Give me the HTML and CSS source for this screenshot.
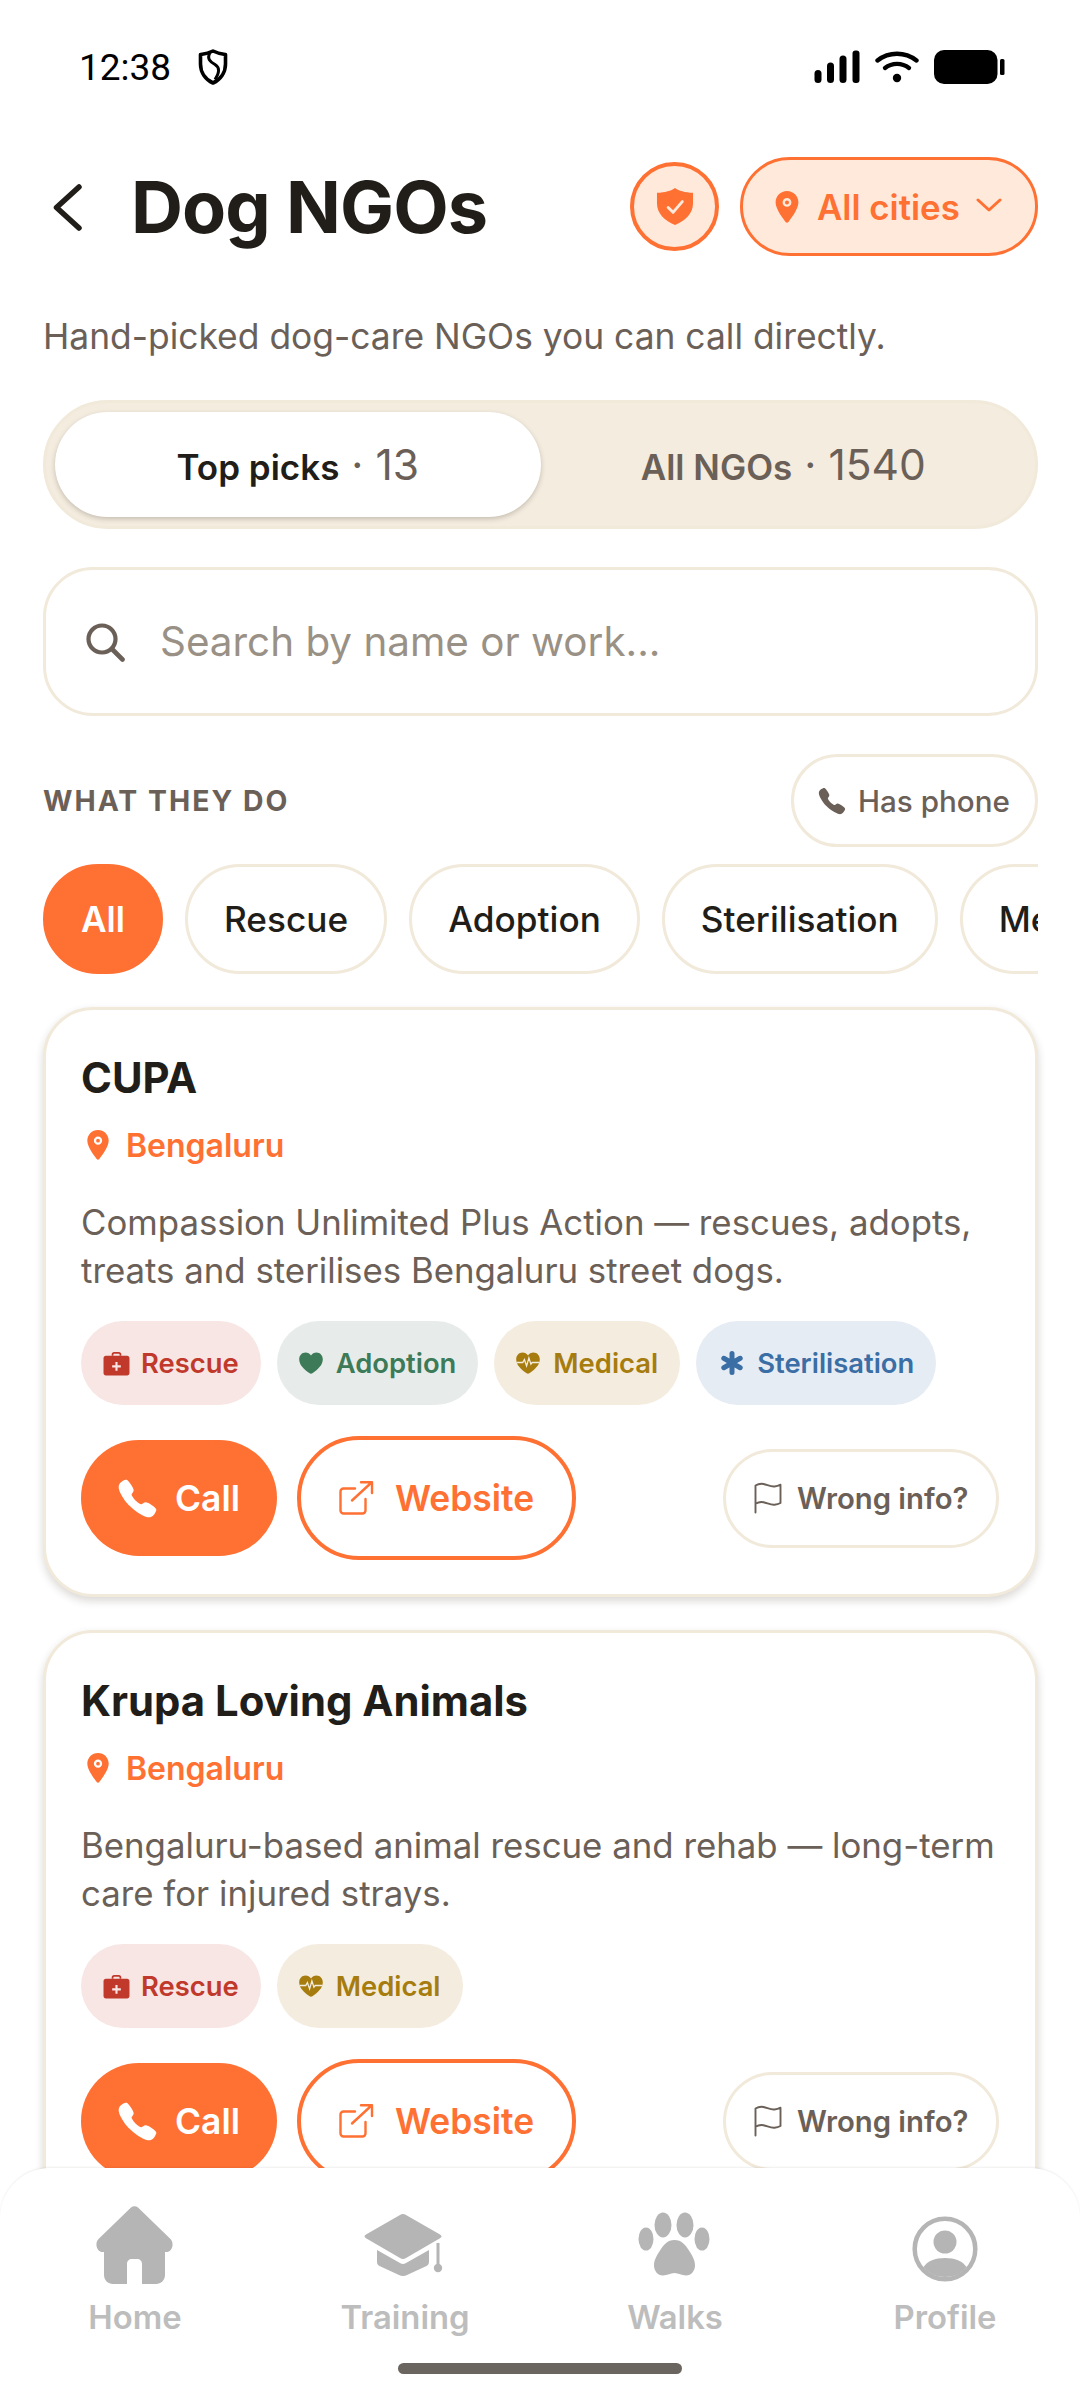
FILE: index.html
```html
<!DOCTYPE html>
<html lang="en">
<head>
<meta charset="utf-8">
<title>Dog NGOs</title>
<link rel="stylesheet" href="styles.css">
</head>
<body>
<svg class="defs" width="0" height="0" aria-hidden="true">
  <symbol id="i-pin" viewBox="0 0 24 32"><path fill-rule="evenodd" d="M12 0C5.6 0 .6 5 .6 11.4c0 7 8.200 16.800 10 19.600.7 1 2.100 1 2.800 0 1.800-2.800 10-12.600 10-19.600C23.400 5 18.400 0 12 0zm0 7a4.400 4.400 0 1 1 0 8.800A4.400 4.400 0 0 1 12 7z"/><circle cx="12" cy="11.400" r="2" /></symbol>
  <symbol id="i-call" viewBox="0 0 512 512"><path d="M391 480c-19.520 0-46.940-7.060-88-30-49.930-28-88.550-53.850-138.210-103.380C116.910 298.770 93.610 267.790 61 208.450c-36.840-67-30.560-102.120-23.540-117.130C45.820 73.380 58.160 62.650 74.110 52a176.300 176.300 0 0 1 28.640-15.200c1-.43 1.930-.84 2.760-1.210 4.950-2.230 12.450-5.600 21.950-2 6.340 2.380 12 7.250 20.860 16 18.170 17.920 43 57.830 52.160 77.430 6.150 13.210 10.220 21.930 10.230 31.710 0 11.450-5.760 20.280-12.750 29.810-1.310 1.790-2.610 3.500-3.870 5.160-7.610 10-9.280 12.890-8.180 18.050 2.230 10.370 18.860 41.240 46.190 68.510s57.310 42.850 67.720 45.070c5.380 1.150 8.330-.59 18.650-8.470 1.480-1.130 3-2.300 4.590-3.470 10.660-7.930 19.080-13.540 30.260-13.540h.06c9.730 0 18.060 4.220 31.860 11.180 18 9.080 59.110 33.590 77.140 51.780 8.770 8.840 13.660 14.480 16.050 20.810 3.600 9.530.21 17-2 22-.37.83-.78 1.740-1.210 2.750a176.490 176.490 0 0 1-15.290 28.580c-10.630 15.900-21.400 28.210-39.380 36.580A67.420 67.420 0 0 1 391 480z"/></symbol>
  <symbol id="i-kit" viewBox="0 0 28 26"><path d="M9 5V3.500C9 2 10 1 11.500 1h5C18 1 19 2 19 3.500V5h-1.800V3.600c0-.5-.3-.8-.8-.8h-4.800c-.5 0-.8.3-.8.800V5z"/><path fill-rule="evenodd" d="M3 5h22c1.500 0 2.500 1 2.500 2.500V23c0 1.500-1 2.500-2.500 2.500H3C1.500 25.500.5 24.500.5 23V7.500C.5 6 1.500 5 3 5zm9.900 6.500v3.400H9.500v2.200h3.400v3.400h2.200v-3.400h3.400v-2.200h-3.400v-3.400z"/></symbol>
  <symbol id="i-heart" viewBox="0 0 24 22"><path d="M12 21.800c-.5 0-1-.2-1.400-.5C4.800 17 .2 13 .2 7.200.2 3.300 3 .4 6.500.4 8.800.4 10.800 1.600 12 3.500 13.200 1.600 15.200.4 17.500.4c3.500 0 6.300 2.900 6.300 6.800 0 5.800-4.600 9.800-10.400 14.100-.4.300-.9.500-1.400.5z"/></symbol>
  <symbol id="i-fit" viewBox="0 0 24 22"><path d="M12 21.800c-.5 0-1-.2-1.400-.5C4.800 17 .2 13 .2 7.200.2 3.300 3 .4 6.500.4 8.800.4 10.800 1.600 12 3.500 13.200 1.600 15.200.4 17.500.4c3.500 0 6.300 2.900 6.300 6.800 0 5.800-4.600 9.800-10.400 14.100-.4.300-.9.500-1.400.5z"/><path d="M.6 10.500h6.200l1.600-3 2.200 6.400 2.300-8 2 6.200 1.300-1.600h7.200" fill="none" stroke="#f4ecdf" stroke-width="1.300"/></symbol>
  <symbol id="i-star" viewBox="0 0 24 24"><g stroke="currentColor" stroke-width="5" stroke-linecap="round"><path d="M12 2.500v19M3.800 7.250l16.400 9.500M20.200 7.250l-16.400 9.500"/></g></symbol>
  <symbol id="i-open" viewBox="0 0 36 36"><path d="M17 8.500H5.500A3 3 0 0 0 2.500 11.500V30.500a3 3 0 0 0 3 3H24.500a3 3 0 0 0 3-3V19" fill="none" stroke="currentColor" stroke-width="2.400" stroke-linecap="round"/><path d="M14 20.500L33.500 2.500M23 2.200h11v10.800" fill="none" stroke="currentColor" stroke-width="2.400" stroke-linecap="round" stroke-linejoin="round"/></symbol>
  <symbol id="i-flag" viewBox="0 0 28 32"><path d="M1.500 30.500V3.500C4 2 6.500 1.400 9.500 2c4 .9 7.500 3 11 2.500 2-.2 4-.8 6-1.800v18.300c-2 1-4 1.500-6 1.700-3.500.4-7-1.600-11-2.500-3-.6-5.500 0-8 1.500" fill="none" stroke="currentColor" stroke-width="1.900" stroke-linecap="round" stroke-linejoin="round"/></symbol>
</svg>

<div class="screen">
  <div class="status">
    <div class="status-left">
      <span class="time">12:38</span>
      <svg class="status-shield" viewBox="0 0 30 36"><path d="M15 2C10 4.500 6 5 2.500 5.500V15c0 8.500 5 15.500 12.500 19 7.500-3.500 12.500-10.500 12.500-19V5.500C24 5 20 4.500 15 2z" fill="none" stroke="#000" stroke-width="3.600" stroke-linejoin="round"/><path d="M12 3.500C8.500 10 12.500 13 17 15.500c5 3 4.500 8 0 15" fill="none" stroke="#000" stroke-width="3"/></svg>
    </div>
    <div class="status-right">
      <svg class="signal" viewBox="0 0 46 34"><rect x="0.500" y="20" width="7" height="13" rx="3.500"/><rect x="13" y="12.500" width="7" height="20.500" rx="3.500"/><rect x="25.500" y="5.500" width="7" height="27.500" rx="3.500"/><rect x="38.500" y="0.500" width="7" height="32.500" rx="3"/></svg>
      <svg class="wifi" viewBox="0 0 44 32"><g fill="none" stroke="#000" stroke-width="4.400" stroke-linecap="round"><path d="M2.500 9.500C14 .5 30 .5 41.500 9.500"/><path d="M10 17C17 11.500 27 11.500 34 17"/></g><circle cx="22" cy="27" r="4.200"/></svg>
      <svg class="battery" viewBox="0 0 71 34"><rect x="0" y="0" width="63.500" height="34" rx="10"/><rect x="66" y="9" width="4.500" height="16" rx="1.500"/></svg>
    </div>
  </div>

  <header class="head">
    <svg class="back" viewBox="0 0 30 48"><path d="M26 4L3.500 24.500 26 45" fill="none" stroke="#211d18" stroke-width="5.500" stroke-linecap="round" stroke-linejoin="round"/></svg>
    <h1 class="title">Dog NGOs</h1>
    <div class="head-actions">
      <span class="shield-btn">
        <svg class="shield-ic" viewBox="0 0 38 38"><path d="M19 0c4 3 10 4.500 18.500 5v11c0 10-8 18-18.500 22C8.500 34 .5 26 .5 16V5C9 4.500 15 3 19 0z" fill="#ff7033"/><path d="M12 20l5 5 9.500-11" fill="none" stroke="#ffe9db" stroke-width="3" stroke-linecap="round" stroke-linejoin="round"/></svg>
      </span>
      <span class="city">
        <svg class="city-pin"><use href="#i-pin"/></svg>
        <span>All cities</span>
        <svg class="city-chev" viewBox="0 0 26 14"><path d="M2 2l11 10L24 2" fill="none" stroke="#ff7033" stroke-width="3" stroke-linecap="round" stroke-linejoin="round"/></svg>
      </span>
    </div>
  </header>

  <p class="sub">Hand-picked dog-care NGOs you can call directly.</p>

  <div class="segment">
    <div class="seg on"><b>Top picks</b><i>·</i><span>13</span></div>
    <div class="seg"><b>All NGOs</b><i>·</i><span>1540</span></div>
  </div>

  <div class="search">
    <svg class="search-ic" viewBox="0 0 40 40"><circle cx="17" cy="17" r="13.500" fill="none" stroke="#6b6058" stroke-width="4.200"/><path d="M27 27l10.500 10.500" stroke="#6b6058" stroke-width="4.600" stroke-linecap="round"/></svg>
    <span class="placeholder">Search by name or work...</span>
  </div>

  <div class="filter-row">
    <span class="eyebrow">WHAT THEY DO</span>
    <span class="has-phone"><svg class="hp-ic"><use href="#i-call"/></svg>Has phone</span>
  </div>

  <div class="chips">
    <span class="chip on">All</span>
    <span class="chip">Rescue</span>
    <span class="chip">Adoption</span>
    <span class="chip">Sterilisation</span>
    <span class="chip">Medical</span>
  </div>

  <article class="card">
    <h2 class="name">CUPA</h2>
    <div class="loc"><svg class="loc-ic"><use href="#i-pin"/></svg>Bengaluru</div>
    <p class="desc">Compassion Unlimited Plus Action — rescues, adopts, treats and sterilises Bengaluru street dogs.</p>
    <div class="tags">
      <span class="tag red"><svg class="t-kit"><use href="#i-kit"/></svg>Rescue</span>
      <span class="tag green"><svg class="t-heart"><use href="#i-heart"/></svg>Adoption</span>
      <span class="tag gold"><svg class="t-heart"><use href="#i-fit"/></svg>Medical</span>
      <span class="tag blue"><svg class="t-star"><use href="#i-star"/></svg>Sterilisation</span>
    </div>
    <div class="actions">
      <span class="btn call"><svg class="b-call"><use href="#i-call"/></svg>Call</span>
      <span class="btn web"><svg class="b-open"><use href="#i-open"/></svg>Website</span>
      <span class="btn wrong"><svg class="b-flag"><use href="#i-flag"/></svg>Wrong info?</span>
    </div>
  </article>

  <article class="card">
    <h2 class="name">Krupa Loving Animals</h2>
    <div class="loc"><svg class="loc-ic"><use href="#i-pin"/></svg>Bengaluru</div>
    <p class="desc">Bengaluru-based animal rescue and rehab — long-term care for injured strays.</p>
    <div class="tags">
      <span class="tag red"><svg class="t-kit"><use href="#i-kit"/></svg>Rescue</span>
      <span class="tag gold"><svg class="t-heart"><use href="#i-fit"/></svg>Medical</span>
    </div>
    <div class="actions">
      <span class="btn call"><svg class="b-call"><use href="#i-call"/></svg>Call</span>
      <span class="btn web"><svg class="b-open"><use href="#i-open"/></svg>Website</span>
      <span class="btn wrong"><svg class="b-flag"><use href="#i-flag"/></svg>Wrong info?</span>
    </div>
  </article>

  <nav class="nav">
    <div class="tabs">
      <div class="tab">
        <svg class="tab-ic" viewBox="0 0 90 80"><path d="M41 1.500c2-1.800 5-1.800 7 0L80.500 33c4 4 2 13-4.500 13H75v23c0 5-4 9-9 9H52V58c0-3-2-5-5-5h-5c-3 0-5 2-5 5v20H23c-5 0-9-4-9-9V46h-1c-6.500 0-8.500-9-4.500-13z"/></svg>
        <span>Home</span>
      </div>
      <div class="tab">
        <svg class="tab-ic" viewBox="0 0 90 80"><path d="M40 9c2-1.200 4-1.200 6 0l34 19.500c2 1.200 2 2.500 0 3.700L46 52c-2 1.200-4 1.200-6 0L6 32.200c-2-1.200-2-2.500 0-3.700z"/><path d="M17 44l23 13c2 1.200 4 1.200 6 0l23-13v12c0 2-1 3-2.500 4L47 69c-2.500 1.300-5.500 1.300-8 0L19.500 60C18 59 17 58 17 56z"/><path d="M78 37v24" stroke="#b5b5b5" stroke-width="3"/><circle cx="78" cy="62" r="4.200"/></svg>
        <span>Training</span>
      </div>
      <div class="tab">
        <svg class="tab-ic" viewBox="0 0 90 80"><ellipse cx="16" cy="33" rx="7.500" ry="11.500"/><ellipse cx="33" cy="19" rx="8.500" ry="12.500"/><ellipse cx="55" cy="19" rx="8.500" ry="12.500"/><ellipse cx="72" cy="33" rx="7.500" ry="11.500"/><path d="M44.500 34c7 0 11 5 14.500 10.500 3 5 6 9 6 15 0 5-3.500 10-9 10-4.500 0-7.500-2.500-11.500-2.500s-7 2.500-11.500 2.500c-5.500 0-9-5-9-10 0-6 3-10 6-15C33.500 39 37.500 34 44.500 34z"/></svg>
        <span>Walks</span>
      </div>
      <div class="tab">
        <svg class="tab-ic" viewBox="0 0 90 80"><circle cx="45" cy="43" r="30.300" fill="none" stroke="#b5b5b5" stroke-width="4.500"/><circle cx="45" cy="36" r="11.500"/><path d="M23.500 61C27.500 55 35 52 45 52s17.500 3 21.500 9C61 68 53.500 71 45 71s-16-3-21.500-10z"/></svg>
        <span>Profile</span>
      </div>
    </div>
    <div class="home-bar"></div>
  </nav>
</div>
</body>
</html>
```
FILE: styles.css
```css
* { box-sizing: border-box; }
html, body { margin: 0; padding: 0; background: #fff; }
body { font-family: Inter, "Liberation Sans", sans-serif; color: #211d18; }
.defs { position: absolute; }
svg { display: block; flex: none; fill: currentColor; }

.screen { position: relative; width: 1080px; height: 2400px; overflow: hidden; background: #fff; padding: 0 42px 0 43px; }

.status { height: 134px; display: flex; align-items: center; justify-content: space-between; margin: 0 -42px 0 -43px; padding: 0 75px 0 79px; color: #000; }
.status-left { display: flex; align-items: center; gap: 27px; }
.time { font-family: Roboto, sans-serif; font-size: 37px; color: #000; }
.status-shield { width: 30px; height: 36px; }
.status-right { display: flex; align-items: center; gap: 15px; }
.signal { width: 46px; height: 34px; }
.wifi { width: 44px; height: 32px; }
.battery { width: 71px; height: 34px; }

.head { display: flex; align-items: center; height: 99px; margin-top: 23px; }
.back { width: 30px; height: 48px; margin-left: 10px; }
.title { margin: 0 0 0 48px; font-size: 72px; font-weight: 700; letter-spacing: -.9px; line-height: 1; color: #211d18; }
.head-actions { margin-left: auto; display: flex; align-items: center; gap: 21px; }
.shield-btn { width: 89px; height: 89px; border-radius: 50%; border: 4px solid #ff7033; background: #ffe9db; display: flex; align-items: center; justify-content: center; }
.shield-ic { width: 38px; height: 37px; }
.city { height: 99px; width: 298px; border-radius: 50px; border: 3px solid #ff7033; background: #ffe9db; color: #ff7033; display: flex; align-items: center; padding-left: 32px; font-size: 34.800px; font-weight: 600; }
.city-pin { width: 24px; height: 32px; margin-right: 18px; }
.city-chev { width: 26px; height: 14px; margin-left: 16px; margin-top: -4px; }

.sub { margin: 59px 0 0; font-size: 35.400px; line-height: 44px; color: #6b6058; }

.segment { display: flex; margin-top: 41px; height: 129px; padding: 9px; border-radius: 65px; background: #f4ecdf; border: 3px solid #f1e9da; }
.seg { flex: 1; display: flex; align-items: baseline; justify-content: center; gap: 12px; border-radius: 55px; color: #6b6058; line-height: 106px; }
.seg b { font-size: 35px; font-weight: 600; }
.seg i { font-style: normal; font-size: 42px; color: #6b6058; }
.seg span { font-size: 42.500px; font-weight: 400; color: #6b6058; }
.seg.on { background: #fff; color: #211d18; box-shadow: 0 2px 5px rgba(60, 50, 40, .25); }

.search { display: flex; align-items: center; margin-top: 38px; height: 149px; padding: 0 39px; border: 3px solid #f1e9da; border-radius: 50px; background: #fff; }
.search-ic { width: 40px; height: 40px; margin-right: 35px; }
.placeholder { font-size: 40.400px; color: #9a9186; }

.filter-row { display: flex; align-items: center; justify-content: space-between; margin-top: 38px; height: 93px; }
.eyebrow { font-size: 28.400px; font-weight: 700; letter-spacing: 2px; color: #6b6058; }
.has-phone { height: 93px; width: 247px; border: 3px solid #f1e9da; border-radius: 47px; display: flex; align-items: center; padding-left: 23px; font-size: 29.600px; font-weight: 500; color: #6b6058; }
.hp-ic { width: 30px; height: 30px; margin-right: 11px; }

.chips { display: flex; gap: 22px; margin-top: 17px; overflow: hidden; height: 110px; }
.chip { flex: none; height: 110px; padding: 0 36px; border: 3px solid #f1e9da; border-radius: 55px; display: flex; align-items: center; font-size: 35.200px; font-weight: 500; color: #211d18; }
.chip.on { background: #ff7033; border-color: #ff7033; color: #fff; font-weight: 600; padding: 0 35px; }

.card { margin-top: 33px; padding: 42px 36px 34px 35px; border: 3px solid #f1e9da; border-radius: 50px; background: #fff; box-shadow: 0 4px 8px rgba(50, 40, 30, .18); }
.name { margin: 0; font-size: 41.800px; line-height: 52px; font-weight: 700; color: #211d18; }
.loc { display: flex; align-items: center; margin-top: 21px; height: 40px; font-size: 32px; font-weight: 600; color: #ff7033; }
.loc-ic { width: 24px; height: 30px; margin-right: 16px; margin-left: 5px; }
.desc { margin: 33px 0 0; font-size: 34.800px; line-height: 48px; color: #6b6058; }
.tags { display: flex; gap: 16px; margin-top: 27px; }
.tag { height: 84px; padding: 0 22px; border-radius: 42px; display: flex; align-items: center; font-size: 27.400px; font-weight: 600; }
.tag.red { background: #f7e6e4; color: #c0392b; }
.tag.green { background: #e7ecea; color: #3d7a57; }
.tag.gold { background: #f4ecdf; color: #a67c0f; }
.tag.blue { background: #e6ecf4; color: #3a6ea5; padding-left: 24px; }
.t-kit { width: 27px; height: 25px; margin-right: 11px; }
.t-heart { width: 24px; height: 22px; margin-right: 13px; }
.t-star { width: 24px; height: 24px; margin-right: 13px; }

.actions { display: flex; align-items: center; margin-top: 31px; height: 124px; }
.btn { display: flex; align-items: center; border-radius: 62px; }
.call { width: 196px; height: 116px; background: #ff7033; color: #fff; padding-left: 35px; font-size: 35.400px; font-weight: 600; }
.b-call { width: 43px; height: 43px; margin-right: 16px; }
.web { width: 279px; height: 124px; margin-left: 20px; border: 4px solid #ff7033; color: #ff7033; padding-left: 37px; font-size: 35.400px; font-weight: 600; }
.b-open { width: 36px; height: 36px; margin-right: 21px; }
.wrong { width: 276px; height: 99px; margin-left: auto; border: 3px solid #f1e9da; color: #6b6058; padding-left: 28px; font-size: 29.300px; font-weight: 600; }
.b-flag { width: 28px; height: 32px; margin-right: 15px; }

.nav { position: absolute; left: 0; right: 0; bottom: 0; height: 232px; background: #fff; border-radius: 50px 50px 0 0; box-shadow: 0 -1px 2px rgba(60, 50, 40, .08); padding-top: 38px; }
.tabs { display: flex; }
.tab { flex: 1; display: flex; flex-direction: column; align-items: center; color: #b5b5b5; }
.tab-ic { width: 90px; height: 80px; }
.tab span { margin-top: 13px; font-size: 32.800px; line-height: 36px; font-weight: 600; color: #bdbdbd; }
.home-bar { width: 284px; height: 11px; border-radius: 6px; background: #6b6560; margin: 28px auto 0; }
```
